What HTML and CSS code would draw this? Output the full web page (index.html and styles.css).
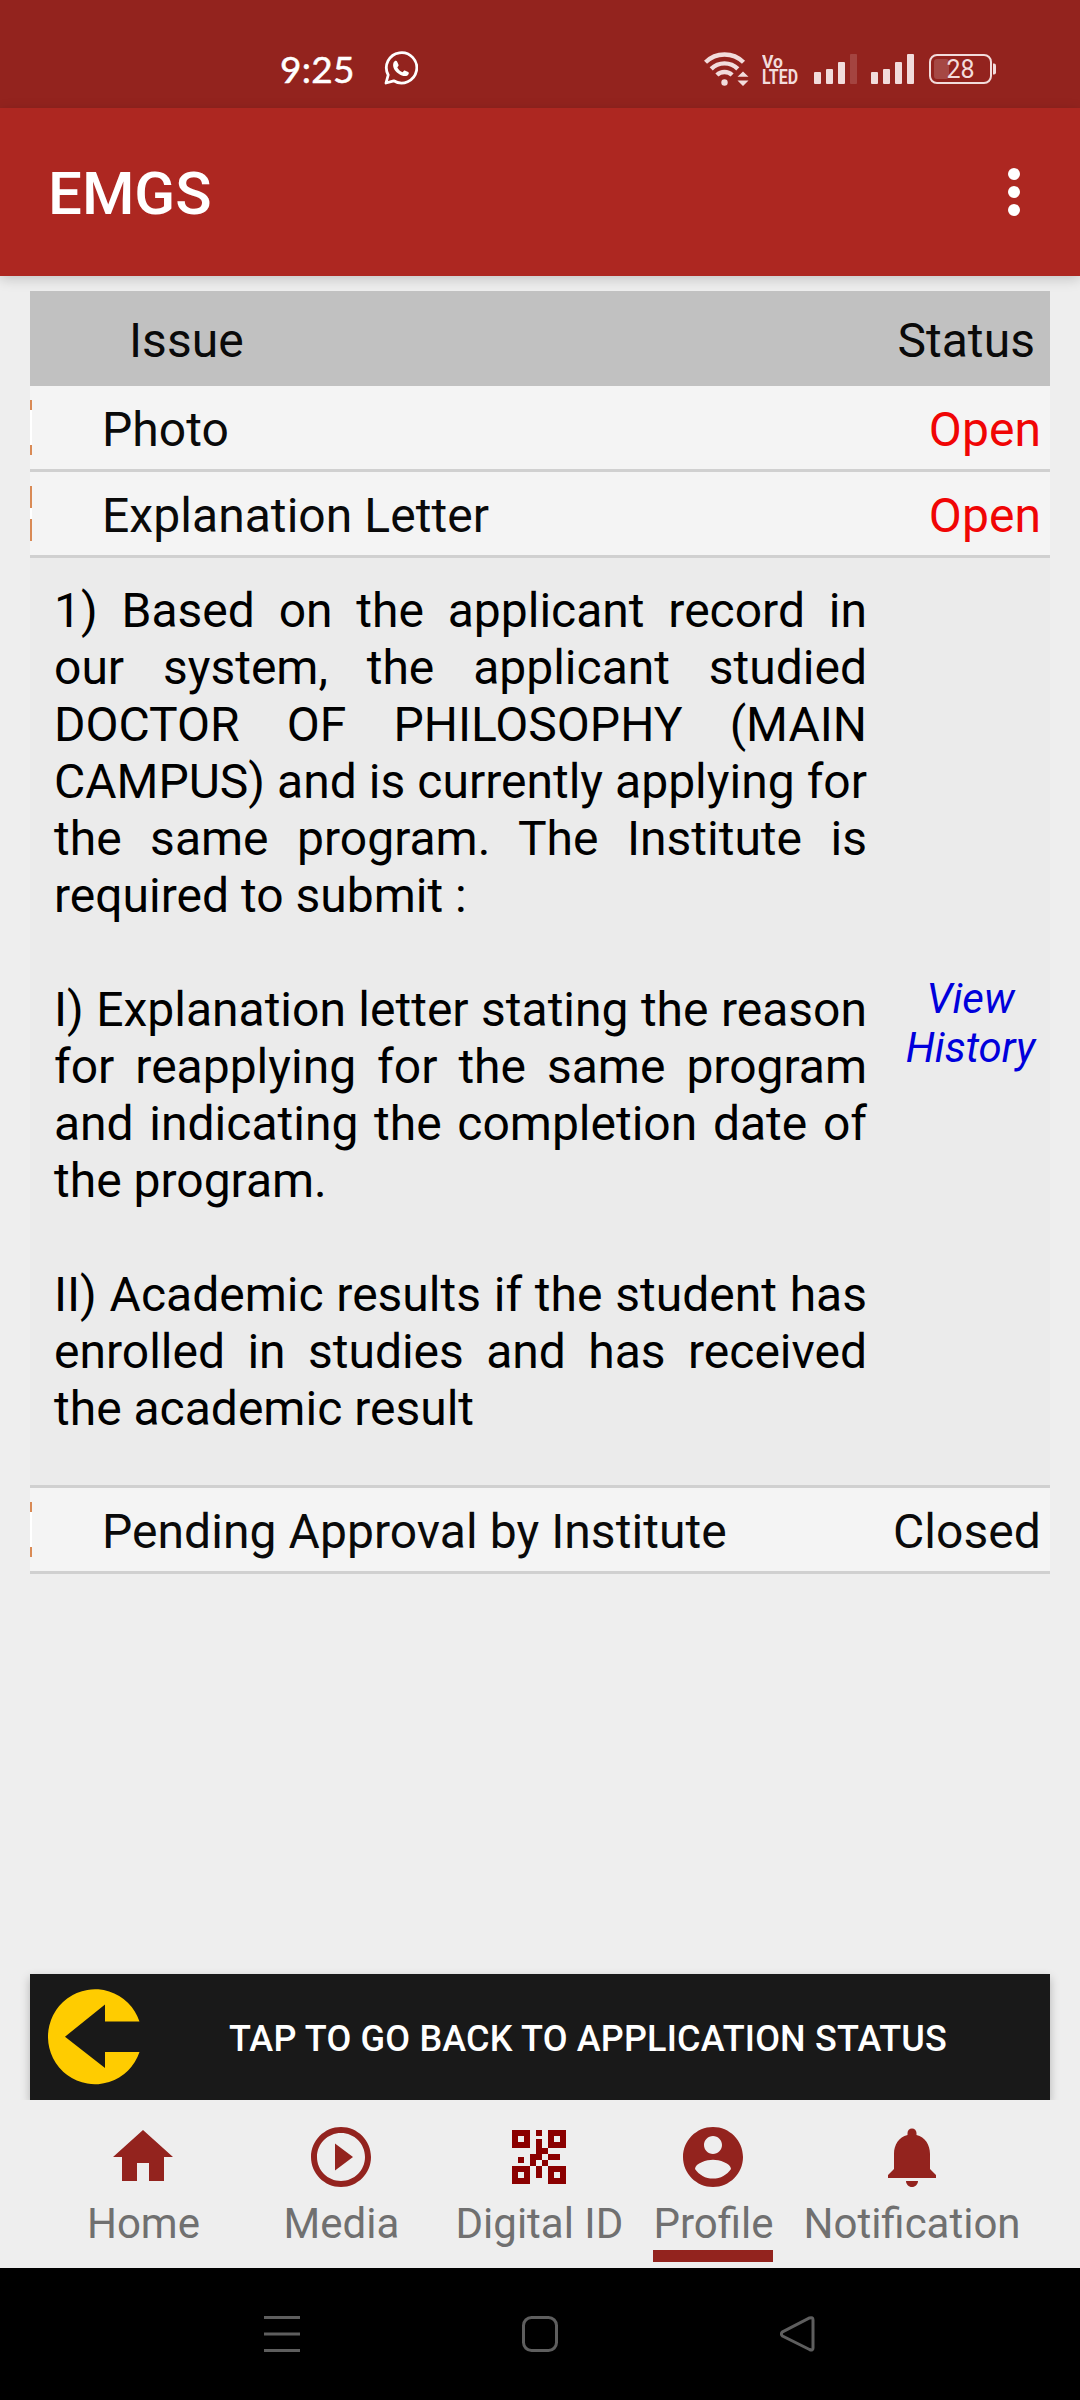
FILE: index.html
```html
<!DOCTYPE html>
<html lang="en">
<head>
    <meta charset="UTF-8">
    <meta name="viewport" content="width=device-width, initial-scale=1.0">
    <title>EMGS</title>
    <link rel="stylesheet" href="styles.css">
</head>
<body>
    <div class="status-bar">
        <span class="clock">9:25</span>
        <svg class="whatsapp" width="34" height="34" viewBox="0 0 34 34">
            <path d="M2 32 L4.200 24 A15.200 15.200 0 1 1 9.700 29.800 Z" fill="none" stroke="#fff" stroke-width="2.8" stroke-linejoin="round"/>
            <path d="M9.600 11.400c1.200-1.900 3-2.100 3.700-.5l1.200 2.900c.3.900-.2 1.500-1.200 2.600 1.300 2.400 3 3.800 5.400 4.800 1-1.300 1.600-2 2.600-1.500l2.900 1.400c1.200.6.7 2.400-.7 3.300-2.400 1.500-5.500.5-9.200-2-3.900-2.700-6.300-7-4.700-11z" fill="#fff"/>
        </svg>
        <div class="signals">
            <svg class="wifi" width="46" height="36" viewBox="0 0 46 36">
                <g fill="none" stroke="#f2dcdc" stroke-width="4.4">
                    <path d="M1.500 11.300A27 27 0 0 1 39.500 11.300"/>
                    <path d="M7.200 17.900A18.800 18.800 0 0 1 33.800 17.900"/>
                    <path d="M12.900 24A11 11 0 0 1 28.100 24"/>
                </g>
                <circle cx="20.500" cy="31.500" r="3.200" fill="#f2dcdc"/>
                <path d="M33.500 25.800L39 20.500L44.500 25.800ZM33.500 29.500L39 35L44.500 29.500Z" fill="#f2dcdc"/>
            </svg>
            <svg class="volte" width="37" height="42" viewBox="0 -6 37 42">
                <text x="0" y="15" font-size="19" textLength="21" lengthAdjust="spacingAndGlyphs">Vo</text>
                <text x="0" y="31" font-size="20" textLength="36" lengthAdjust="spacingAndGlyphs">LTED</text>
            </svg>
            <svg class="bars" width="43" height="30" viewBox="0 0 43 30">
                <g fill="#f2dcdc">
                    <rect x="0" y="18" width="7" height="12" rx="1"/>
                    <rect x="12" y="15" width="7" height="15" rx="1"/>
                    <rect x="24" y="8" width="7" height="22" rx="1"/>
                    <rect x="36" y="0" width="7" height="30" rx="1" opacity="0.18"/>
                </g>
            </svg>
            <svg class="bars" width="43" height="30" viewBox="0 0 43 30">
                <g fill="#f2dcdc">
                    <rect x="0" y="18" width="7" height="12" rx="1"/>
                    <rect x="12" y="15" width="7" height="15" rx="1"/>
                    <rect x="24" y="8" width="7" height="22" rx="1"/>
                    <rect x="36" y="0" width="7" height="30" rx="1"/>
                </g>
            </svg>
            <svg class="battery" width="68" height="30" viewBox="0 0 68 30">
                <rect x="1" y="1" width="61" height="28" rx="7" fill="none" stroke="#f2dcdc" stroke-width="2"/>
                <rect x="5" y="5" width="15" height="20" rx="3" fill="#f2dcdc" opacity="0.2"/>
                <path d="M64 9.500h1q2 0 2 2v7q0 2-2 2h-1z" fill="#f2dcdc"/>
                <text x="31.500" y="24" text-anchor="middle">28</text>
            </svg>
        </div>
    </div>

    <header class="app-bar">
        <h1>EMGS</h1>
        <div class="menu-dots">
            <span></span>
            <span></span>
            <span></span>
        </div>
    </header>

    <main>
        <section class="issues">
            <div class="issues-head">
                <span>Issue</span>
                <span>Status</span>
            </div>
            <div class="issue-row plus">
                <span>Photo</span>
                <span class="open">Open</span>
            </div>
            <div class="issue-row minus">
                <span>Explanation Letter</span>
                <span class="open">Open</span>
            </div>
            <div class="issue-detail">
                <div class="detail-text">
                    <p>1) Based on the applicant record in our system, the applicant studied DOCTOR OF PHILOSOPHY (MAIN CAMPUS) and is currently applying for the same program. The Institute is required to submit :</p>
                    <p>I) Explanation letter stating the reason for reapplying for the same program and indicating the completion date of the program.</p>
                    <p>II) Academic results if the student has enrolled in studies and has received the academic result</p>
                </div>
                <a class="history">View<br>History</a>
            </div>
            <div class="issue-row plus">
                <span>Pending Approval by Institute</span>
                <span>Closed</span>
            </div>
        </section>

        <div class="back-wrap">
            <button class="back-button">
                <svg width="96" height="96" viewBox="0 0 96 96">
                    <path d="M91.500 32.500A47 47.500 0 1 0 91.500 63H57V79L17 47.700L57 15.500V32.500Z" fill="#ffcc00"/>
                </svg>
                <span>TAP TO GO BACK TO APPLICATION STATUS</span>
            </button>
        </div>
    </main>

    <nav class="tabs">
        <a class="tab wide">
            <svg width="72" height="72" viewBox="0 0 24 24"><path d="M10 20v-6h4v6h5v-8h3L12 3 2 12h3v8z"/></svg>
            <span>Home</span>
        </a>
        <a class="tab wide">
            <svg width="72" height="72" viewBox="0 0 24 24"><path d="M10 16.500l6-4.500-6-4.500v9zM12 2C6.480 2 2 6.480 2 12s4.480 10 10 10 10-4.480 10-10S17.520 2 12 2zm0 18c-4.410 0-8-3.590-8-8s3.590-8 8-8 8 3.590 8 8-3.590 8-8 8z"/></svg>
            <span>Media</span>
        </a>
        <a class="tab wide">
            <svg class="qr" width="72" height="72" viewBox="-3 -3 24 24">
                <path fill-rule="evenodd" d="M0 0h6v6H0zM2 2v2h2V2zM12 0h6v6h-6zM14 2v2h2V2zM0 12h6v6H0zM2 14v2h2v-2zM12 12h6v6h-6zM14 14v2h2v-2z"/>
                <path d="M8 0h2v2H8zM8 3h2v3h2v2h-2v2H8v2H6V8h2zM2 9h2v2H2zM12 8h4v2h-4zM10 10h2v2h-2zM8 12h2v4H8z"/>
            </svg>
            <span>Digital ID</span>
        </a>
        <a class="tab active">
            <svg width="72" height="72" viewBox="0 0 24 24"><path d="M12 2C6.480 2 2 6.480 2 12s4.480 10 10 10 10-4.480 10-10S17.520 2 12 2zm0 3c1.660 0 3 1.340 3 3s-1.340 3-3 3-3-1.340-3-3 1.340-3 3-3zm0 14.200c-2.500 0-4.710-1.280-6-3.220.030-1.990 4-3.080 6-3.080 1.990 0 5.970 1.090 6 3.080-1.290 1.940-3.500 3.220-6 3.220z"/></svg>
            <span>Profile</span>
        </a>
        <a class="tab">
            <svg width="72" height="72" viewBox="0 0 24 24"><path d="M12 22c1.100 0 2-.9 2-2h-4c0 1.100.9 2 2 2zm6-6v-5c0-3.070-1.640-5.640-4.500-6.320V4c0-.83-.67-1.500-1.500-1.500s-1.500.67-1.500 1.500v.68C7.630 5.360 6 7.920 6 11v5l-2 2v1h16v-1l-2-2z"/></svg>
            <span>Notification</span>
        </a>
    </nav>

    <footer class="system-nav">
        <svg width="36" height="36" viewBox="0 0 36 36"><path d="M0 1.500h36M0 18h36M0 34.500h36"/></svg>
        <svg width="36" height="36" viewBox="0 0 36 36"><rect x="1.500" y="1.500" width="33" height="33" rx="8"/></svg>
        <svg width="36" height="36" viewBox="0 0 36 36"><path d="M2.500 15.800L29.500 2Q33 .8 33 4V32Q33 35 29.500 33.500L2.500 20Q.2 18 2.500 15.800Z"/></svg>
    </footer>
</body>
</html>
```

FILE: styles.css
```css
* {
    box-sizing: border-box;
}

body {
    font-family: Roboto, Arial, sans-serif;
    margin: 0;
    padding: 0;
    height: 2400px;
    display: flex;
    flex-direction: column;
    background-color: #eeeeee;
    color: #0a0a0a;
}

.status-bar {
    height: 108px;
    display: flex;
    align-items: flex-start;
    background-color: #93231e;
    padding: 51px 83px 0 280px;
}

.clock {
    font-family: Lato, sans-serif;
    font-size: 37px;
    line-height: 35px;
    width: 104px;
    color: #fff;
    letter-spacing: 0.3px;
    -webkit-text-stroke: 0.5px #fff;
}

.signals {
    display: flex;
    align-items: flex-start;
    margin-left: auto;
}

.volte {
    margin: -4px 15px 0 12px;
    font-weight: bold;
    fill: #f2dcdc;
}

.bars {
    margin: 3px 15px 0 0;
}

.bars + .bars {
    margin-left: -1px;
}

.battery {
    margin-top: 3px;
    font-size: 25px;
    fill: #f2dcdc;
}

.app-bar {
    height: 168px;
    display: flex;
    justify-content: space-between;
    align-items: center;
    flex-shrink: 0;
    padding: 0 60px 0 48px;
    background-color: #ad2721;
    box-shadow: 0 3px 12px rgba(0, 0, 0, 0.18);
}

.app-bar h1 {
    margin: 0;
    padding-top: 3px;
    font-size: 60px;
    font-weight: 500;
    color: #fff;
}

.menu-dots {
    display: flex;
    flex-direction: column;
    gap: 6px;
}

.menu-dots span {
    width: 12px;
    height: 12px;
    border-radius: 50%;
    background-color: #fff;
}

main {
    flex: 1;
    display: flex;
    flex-direction: column;
    justify-content: space-between;
    padding-top: 15px;
}

.issues {
    margin: 0 30px;
    font-size: 48px;
    line-height: 57px;
}

.issues-head {
    display: flex;
    justify-content: space-between;
    height: 95px;
    padding: 21px 15px 0 99px;
    background-color: #c1c1c1;
    letter-spacing: 0.06px;
}

.issue-row {
    position: relative;
    display: flex;
    justify-content: space-between;
    height: 86px;
    padding: 15px 9px 0 72px;
    background-color: #f4f4f4;
    border-bottom: 3px solid #d0d0d0;
    letter-spacing: 0.06px;
}

/* visible edge of the expand / collapse icon */
.issue-row::before {
    content: "";
    position: absolute;
    left: 0;
    top: 14px;
    width: 2px;
    height: 55px;
}

.plus::before {
    background: linear-gradient(#d98a55 10px, #fff 10px, #fff 45px, #d98a55 45px);
}

.minus::before {
    background: linear-gradient(#d98a55 22px, #fff 22px, #fff 33px, #d98a55 33px);
}

.open {
    color: #f00505;
}

.issue-detail {
    display: flex;
    height: 930px;
    padding: 24px 0 0 24px;
    background-color: #ebebeb;
    border-bottom: 3px solid #d0d0d0;
    color: #000;
}

.detail-text {
    width: 813px;
    text-align: justify;
}

.detail-text p {
    margin: 0 0 57px;
}

.history {
    flex: 1;
    align-self: center;
    padding: 0 0 22px 24px;
    font-size: 42px;
    line-height: 49px;
    font-style: italic;
    text-align: center;
    color: #0000dc;
}

.back-wrap {
    padding: 12px 30px 0;
    overflow: hidden;
}

.back-button {
    display: flex;
    align-items: center;
    width: 100%;
    height: 126px;
    padding: 0 18px;
    border: none;
    background-color: #191919;
    box-shadow: 0 4px 9px rgba(0, 0, 0, 0.25);
    font-family: inherit;
    font-size: 36px;
    font-weight: 500;
    letter-spacing: 0.18px;
    color: #fff;
    cursor: pointer;
}

.back-button span {
    flex: 1;
    padding-top: 4px;
}

.tabs {
    display: flex;
    justify-content: center;
    height: 168px;
    font-size: 42px;
    line-height: 49px;
    color: #707070;
}

.tab {
    display: flex;
    flex-direction: column;
    align-items: center;
    padding: 21px 15px 0;
}

.wide {
    width: 198px;
    padding-left: 0;
    padding-right: 0;
}

.tab svg {
    fill: #93231e;
}

.tab .qr {
    fill: #8b0000;
}

.tab span {
    margin-top: 6px;
    padding-bottom: 2px;
    border-bottom: 12px solid transparent;
}

.active span {
    border-bottom-color: #93231e;
}

.system-nav {
    display: flex;
    justify-content: center;
    gap: 222px;
    height: 132px;
    padding-top: 48px;
    background-color: #000;
}

.system-nav svg {
    fill: none;
    stroke: #5e5e5e;
    stroke-width: 3;
}
```
